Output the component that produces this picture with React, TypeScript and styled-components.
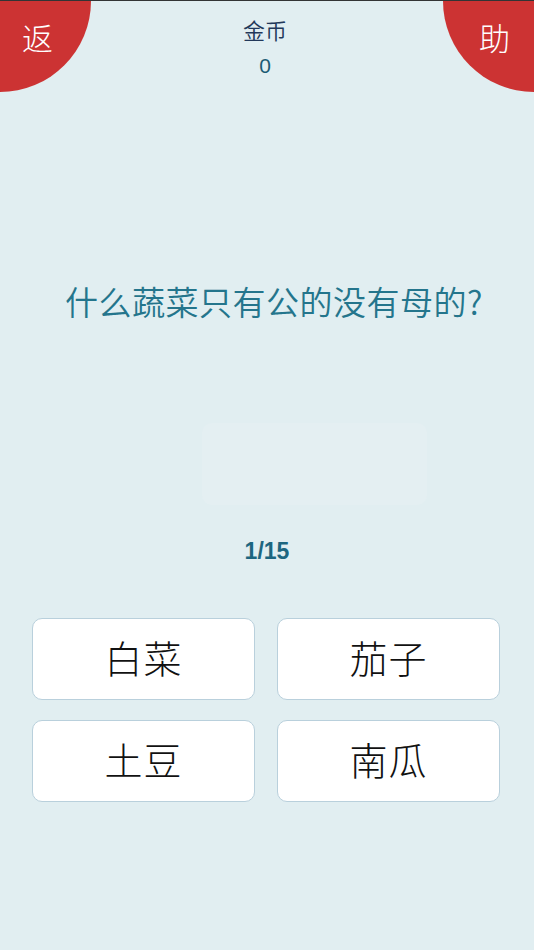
import React from "react";
import styled, { createGlobalStyle } from "styled-components";

const Global = createGlobalStyle`
  html, body { margin: 0; padding: 0; background: #e1eef1; }
  body { font-family: "Noto Sans CJK SC", "Noto Sans", sans-serif; }
  * { box-sizing: border-box; }
`;

const Page = styled.div`
  width: 534px;
  height: 950px;
  background: #e1eef1;
  border-top: 1px solid rgba(0, 0, 0, 0.78);
  display: flex;
  flex-direction: column;
  overflow: hidden;
`;

const Header = styled.div`
  height: 91px;
  display: flex;
  justify-content: space-between;
  align-items: flex-start;
`;

const Corner = styled.button<{ $side: "left" | "right" }>`
  width: 91px;
  height: 91px;
  border: none;
  margin: 0;
  background: #cc3333;
  color: #ffffff;
  font-family: "Noto Sans CJK SC", sans-serif;
  font-weight: 300;
  font-size: 31px;
  line-height: 1;
  display: flex;
  align-items: flex-start;
  justify-content: ${(p) => (p.$side === "left" ? "flex-start" : "flex-end")};
  padding: 20px ${(p) => (p.$side === "left" ? "0 0 22px" : "24px 0 0")};
  border-bottom-right-radius: ${(p) => (p.$side === "left" ? "100%" : "0")};
  border-bottom-left-radius: ${(p) => (p.$side === "right" ? "100%" : "0")};
`;

const Coins = styled.div`
  display: flex;
  flex-direction: column;
  align-items: center;
  padding-top: 15px;
  padding-right: 4px;
`;

const CoinLabel = styled.div`
  font-size: 22px;
  font-weight: 350;
  line-height: 26px;
  color: #22385a;
`;

const CoinValue = styled.div`
  font-family: "Liberation Sans", Arial, sans-serif;
  font-size: 21px;
  line-height: 24px;
  margin-top: 12px;
  color: #1c5b74;
`;

const Question = styled.div`
  margin-top: 189px;
  padding-left: 14px;
  text-align: center;
  font-size: 33px;
  font-weight: 350;
  line-height: 40px;
  color: #24758c;
  letter-spacing: 0.5px;
`;

const AnswerSlot = styled.div`
  margin: 102px 0 0 202px;
  width: 225px;
  height: 82px;
  border-radius: 10px;
  background: #e4eff2;
`;

const Progress = styled.div`
  margin-top: 33px;
  text-align: center;
  font-family: "Liberation Sans", Arial, sans-serif;
  font-weight: bold;
  font-size: 23px;
  line-height: 26px;
  color: #1d6680;
`;

const Options = styled.div`
  margin: 54px 34px 0 32px;
  display: grid;
  grid-template-columns: 1fr 1fr;
  column-gap: 22px;
  row-gap: 20px;
`;

const Option = styled.button`
  height: 82px;
  background: #ffffff;
  border: 1px solid #b9d0dc;
  border-radius: 10px;
  font-family: "Noto Sans CJK SC", sans-serif;
  font-weight: 300;
  font-size: 38px;
  color: #111111;
  display: flex;
  align-items: center;
  justify-content: center;
  letter-spacing: 1px;
  padding: 0 0 5px;
`;

export default function App() {
  const options = ["白菜", "茄子", "土豆", "南瓜"];
  return (
    <>
      <Global />
      <Page>
        <Header>
          <Corner $side="left">返</Corner>
          <Coins>
            <CoinLabel>金币</CoinLabel>
            <CoinValue>0</CoinValue>
          </Coins>
          <Corner $side="right">助</Corner>
        </Header>
        <Question>什么蔬菜只有公的没有母的?</Question>
        <AnswerSlot />
        <Progress>1/15</Progress>
        <Options>
          {options.map((o) => (
            <Option key={o}>{o}</Option>
          ))}
        </Options>
      </Page>
    </>
  );
}
